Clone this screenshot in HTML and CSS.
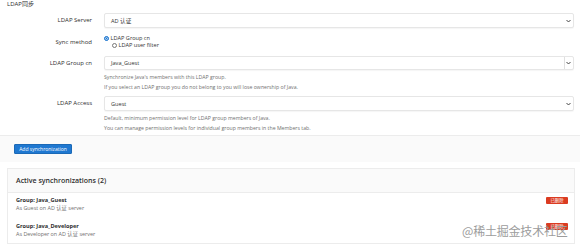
FILE: index.html
```html
<!DOCTYPE html>
<html>
<head>
<meta charset="utf-8">
<link rel="stylesheet" href="styles.css">
</head>
<body>
<div class="page">
  <div class="title">LDAP同步</div>

  <div class="row r1">
    <div class="label">LDAP Server</div>
    <div class="ctl">
      <div class="select">
        <span>AD 认证</span>
        <svg class="chev" width="5" height="4" viewBox="0 0 5 4"><path d="M0.5 1 L2.5 3 L4.5 1" fill="none" stroke="#333" stroke-width="0.9"/></svg>
      </div>
    </div>
  </div>

  <div class="row r2">
    <div class="label">Sync method</div>
    <div class="ctl radios">
      <div class="radio-line"><span class="radio on"></span>LDAP Group cn</div>
      <div class="radio-line second"><span class="radio"></span>LDAP user filter</div>
    </div>
  </div>

  <div class="row r3">
    <div class="label">LDAP Group cn</div>
    <div class="ctl">
      <div class="select input">
        <span>Java_Guest</span>
        <span class="sidebar"></span>
        <svg class="chev" width="5" height="4" viewBox="0 0 5 4"><path d="M0.5 1 L2.5 3 L4.5 1" fill="none" stroke="#333" stroke-width="0.9"/></svg>
      </div>
      <div class="help">
        <div>Synchronize Java's members with this LDAP group.</div>
        <div>If you select an LDAP group you do not belong to you will lose ownership of Java.</div>
      </div>
    </div>
  </div>

  <div class="row r4">
    <div class="label">LDAP Access</div>
    <div class="ctl">
      <div class="select">
        <span>Guest</span>
        <svg class="chev" width="5" height="4" viewBox="0 0 5 4"><path d="M0.5 1 L2.5 3 L4.5 1" fill="none" stroke="#333" stroke-width="0.9"/></svg>
      </div>
      <div class="help">
        <div>Default, minimum permission level for LDAP group members of Java.</div>
        <div>You can manage permission levels for individual group members in the Members tab.</div>
      </div>
    </div>
  </div>

  <div class="actions">
    <button class="btn">Add synchronization</button>
  </div>

  <div class="panel">
    <div class="panel-head">Active synchronizations (2)</div>
    <div class="panel-list">
      <div class="item">
        <div class="item-text">
          <div class="gname">Group: Java_Guest</div>
          <div class="gdesc">As Guest on AD 认证 server</div>
        </div>
        <span class="badge">已删除</span>
      </div>
      <div class="item">
        <div class="item-text">
          <div class="gname">Group: Java_Developer</div>
          <div class="gdesc">As Developer on AD 认证 server</div>
        </div>
        <span class="badge">已删除</span>
      </div>
    </div>
  </div>

  <div class="watermark">@稀土掘金技术社区</div>
</div>
</body>
</html>
```

FILE: styles.css
```css
* { box-sizing: border-box; }
html, body { margin: 0; padding: 0; background: #fff; }
body {
  font-family: "Open Sans", "Noto Sans", "Noto Sans CJK SC", sans-serif;
  color: #2e2e2e;
  width: 580px;
  height: 248px;
  overflow: hidden;
}
.page { position: relative; width: 580px; height: 248px; }

.title {
  height: 9px;
  line-height: 9px;
  font-size: 6px;
  padding-left: 7px;
  color: #2e2e2e;
}

.row {
  display: grid;
  grid-template-columns: 92px 1fr;
  column-gap: 12px;
  padding-right: 6px;
}
.label {
  text-align: right;
  font-size: 6px;
  color: #2e2e2e;
  line-height: 15px;
  height: 15px;
}
.r1 { margin-top: 4px; }
.r2 { margin-top: 7px; }
.r2 .label { line-height: 14px; }
.r3 { margin-top: 6px; }
.r3 .label { line-height: 14px; }
.r4 { margin-top: 4px; }

.select {
  position: relative;
  height: 15px;
  border: 1px solid #e6e6e6;
  border-radius: 2px;
  background: #fff;
  box-shadow: 0 1px 1px rgba(0,0,0,0.04);
  display: flex;
  align-items: center;
  padding-left: 6px;
  font-size: 5.6px;
  color: #333;
}
.select span { flex: 1; }
.select .chev { margin-right: 2px; }
.select.input { height: 14px; }
.select.input .sidebar {
  flex: none;
  width: 1px;
  height: 12px;
  background: #e0e0e0;
  margin-right: 1px;
}

.radios { font-size: 5.6px; color: #333; }
.radio-line {
  display: flex;
  align-items: center;
  height: 7px;
  line-height: 7px;
}
.radio-line.second { padding-left: 8px; }
.radio {
  display: inline-block;
  width: 5px;
  height: 5px;
  border-radius: 50%;
  border: 0.7px solid #777;
  margin-right: 1.5px;
  background: #fff;
}
.radio.on {
  border: 1.4px solid #1f78d1;
  background: #1f78d1;
  box-shadow: inset 0 0 0 0.6px #fff;
}

.help {
  margin-top: 3px;
  font-size: 5.2px;
  color: #707070;
  line-height: 9.5px;
}
.r4 .help { margin-top: 3px; }

.actions {
  margin-top: 2px;
  background: #fafafa;
  border-top: 1px solid #ececec;
  padding: 8px 0 8px 14px;
  height: 27px;
}
.btn {
  display: block;
  height: 10px;
  width: 58px;
  padding: 0;
  border: 1px solid #1b69b6;
  border-radius: 1px;
  background: #1f78d1;
  color: #fff;
  font-family: inherit;
  font-size: 5px;
  line-height: 8px;
}

.panel {
  margin: 6px 5px 0 7px;
}
.panel-head {
  height: 24px;
  line-height: 23px;
  background: #fafafa;
  border: 1px solid #ececec;
  border-bottom: none;
  padding-left: 8px;
  font-size: 7px;
  font-weight: 600;
  color: #2e2e2e;
}
.panel-list {
  background: #fff;
  border: 1px solid #ececec;
  padding: 3px 0 4px 0;
}
.item {
  display: flex;
  justify-content: space-between;
  align-items: flex-start;
  padding: 0 6px 0 8px;
}
.item + .item { margin-top: 9px; }
.gname {
  font-size: 5.6px;
  font-weight: 700;
  line-height: 8px;
  color: #2e2e2e;
}
.gdesc {
  font-size: 5.4px;
  line-height: 9px;
  color: #707070;
}
.badge {
  margin-top: 1px;
  width: 22px;
  height: 7px;
  background: #db3b21;
  border-radius: 1px;
  color: #fff;
  font-size: 4.3px;
  line-height: 7px;
  text-align: center;
}

.watermark {
  position: absolute;
  left: 462px;
  top: 224px;
  font-size: 12px;
  line-height: 14px;
  color: #9c9c9c;
  letter-spacing: -0.2px;
  font-family: "Noto Sans CJK SC", sans-serif;
}
```
